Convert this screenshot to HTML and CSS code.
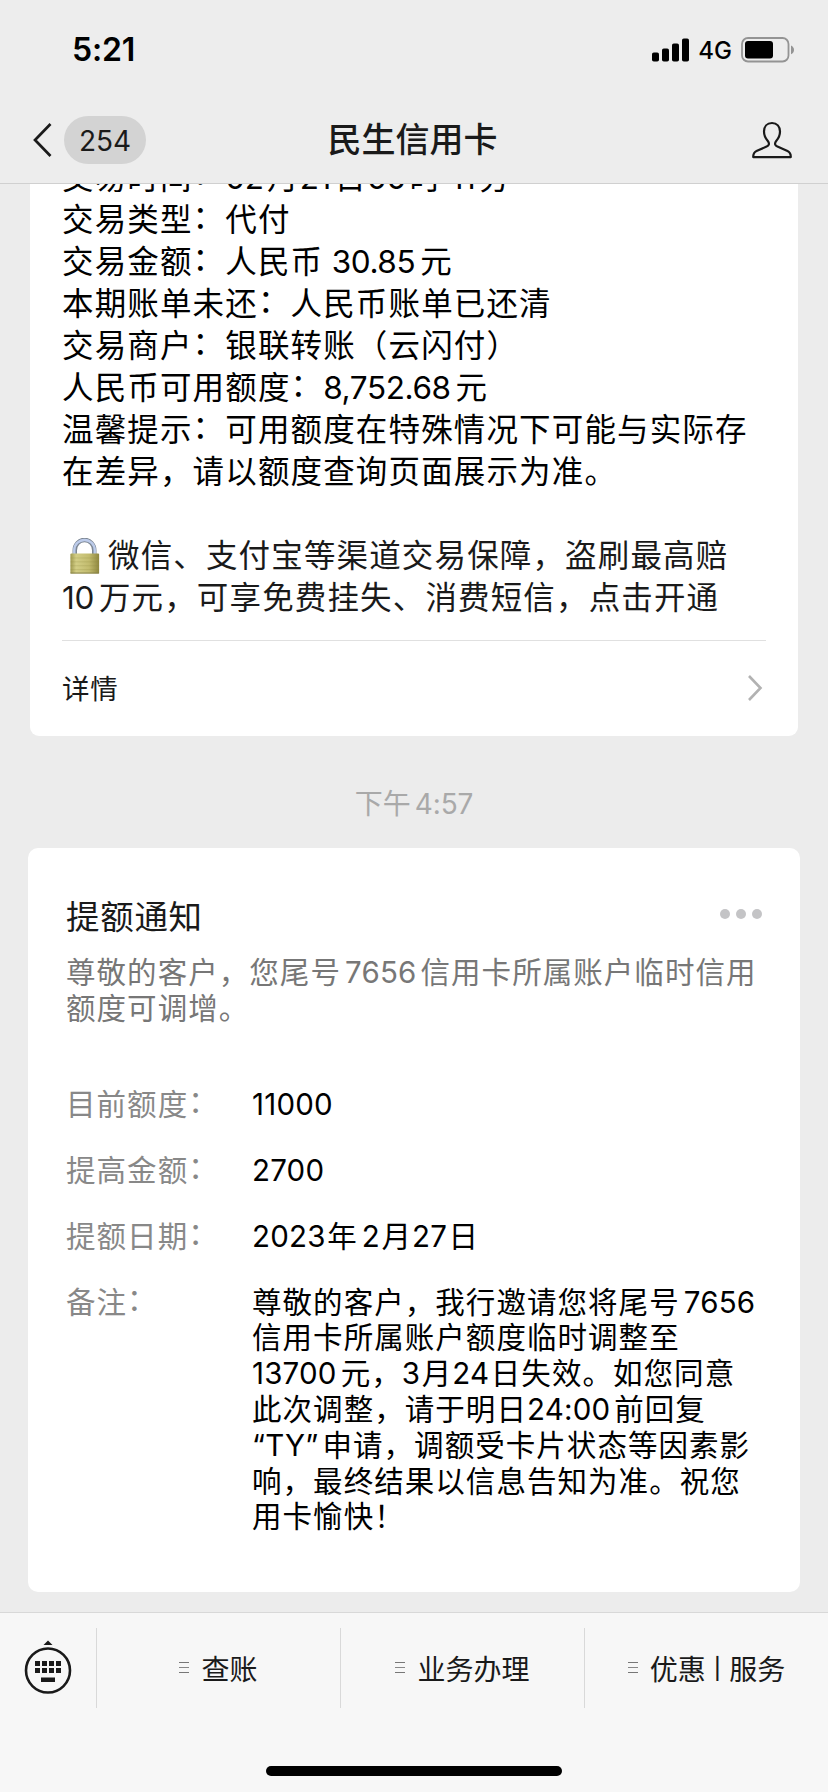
FILE: index.html
```html
<!DOCTYPE html>
<html lang="zh-CN">
<head>
<meta charset="utf-8">
<title>民生信用卡</title>
<link rel="stylesheet" href="styles.css">
</head>
<body>
<div class="screen">
  <header class="header">
    <div class="status">
      <span class="clock">5:21</span>
      <div class="status-right">
        <svg class="signal" width="37" height="24" viewBox="0 0 37 24"><rect x="0" y="14.5" width="7" height="9" rx="1.8"/><rect x="10" y="10.5" width="7" height="13" rx="1.8"/><rect x="20" y="5.5" width="7" height="18" rx="1.8"/><rect x="30" y="0.5" width="7" height="23" rx="1.8"/></svg>
        <span class="net">4G</span>
        <svg class="battery" width="54" height="26" viewBox="0 0 54 26"><rect x="1" y="1" width="46.5" height="23.5" rx="6" fill="none" stroke="#949494" stroke-width="1.8"/><rect x="4" y="4" width="28" height="17.5" rx="3" fill="#000"/><path d="M50 8.5c4 1.8 4 7 0 8.8z" fill="#949494"/></svg>
      </div>
    </div>
    <nav class="nav">
      <div class="nav-left">
        <svg width="20" height="36" viewBox="0 0 20 36" fill="none" stroke="#1a1a1a" stroke-width="2.7"><path d="M17.5 2L2 18l15.500 16"/></svg>
        <span class="unread">254</span>
      </div>
      <h1 class="title">民生信用卡</h1>
      <svg class="person" width="40" height="38" viewBox="0 0 40 38" fill="none" stroke="#1a1a1a" stroke-width="2.200" stroke-linejoin="round"><path d="M20 2c-5 0-8 3.500-8 8.500c0 4 1.600 7 3.800 9.500c1.800 2.200 1.500 4.400-1.200 5.600L4.500 30.100C1.500 31.500 1.200 33 1.200 36.100h37.600c0-3.100-.3-4.600-3.300-6L25.400 25.600c-2.700-1.200-3-3.400-1.200-5.600c2.200-2.500 3.800-5.500 3.800-9.500C28 5.500 25 2 20 2z"/></svg>
    </nav>
  </header>
  <main class="chat">
    <section class="card card-trade">
      <div class="trade-text">
        <p class="tight">交易时间<span class="c">：</span><span class="n">02</span>月<span class="n">21</span>日<span class="n">00</span>时<span class="n"> 11</span>分</p>
        <p>交易类型<span class="c">：</span>代付</p>
        <p>交易金额<span class="c">：</span>人民币<span class="n"> 30.85</span>元</p>
        <p>本期账单未还<span class="c">：</span>人民币账单已还清</p>
        <p>交易商户<span class="c">：</span>银联转账（云闪付）</p>
        <p>人民币可用额度<span class="c">：</span><span class="n">8,752.68</span>元</p>
        <p>温馨提示<span class="c">：</span>可用额度在特殊情况下可能与实际存</p>
        <p>在差异，请以额度查询页面展示为准。</p>
        <p class="gap"></p>
        <p class="soft"><svg class="lock" width="32" height="38" viewBox="0 0 32 38"><defs><linearGradient id="brass" x1="0" x2="1"><stop offset="0" stop-color="#a09a50"/><stop offset=".2" stop-color="#d3ce86"/><stop offset=".65" stop-color="#c2bb6e"/><stop offset="1" stop-color="#8f873f"/></linearGradient></defs><path d="M5.500 18V12.500a10 10.500 0 0 1 20 0V18" fill="none" stroke="#7d8794" stroke-width="4.600"/><path d="M5 18V12.500a10.500 10.500 0 0 1 21 0V18" fill="none" stroke="#bccbea" stroke-width="2.500"/><rect x="1" y="16" width="29.500" height="20.500" rx="1" fill="url(#brass)"/><path d="M1 20.500h29.500M1 24.500h29.500M1 28.500h29.500M1 32.500h29.500" stroke="#8d863f" stroke-opacity=".25"/><path d="M1 36h29.500" stroke="#858048"/></svg>微信、支付宝等渠道交易保障，盗刷最高赔</p>
        <p class="soft"><span class="n">10</span>万元，可享免费挂失、消费短信，点击开通</p>
      </div>
      <div class="detail">
        <span class="detail-label">详情</span>
        <svg class="chevron" width="16" height="28" viewBox="0 0 16 28" fill="none" stroke="#b2b2b2" stroke-width="2.600"><path d="M2 2l11.500 12L2 26"/></svg>
      </div>
    </section>
    <div class="time">下午<span class="n">4:57</span></div>
    <section class="card card-notice">
      <div class="notice-head">
        <h2>提额通知</h2>
        <div class="dots"><i></i><i></i><i></i></div>
      </div>
      <div class="notice-sub">
        <p>尊敬的客户，您尾号<span class="n lead trail">7656</span>信用卡所属账户临时信用</p>
        <p>额度可调增。</p>
      </div>
      <dl class="rows">
        <dt>目前额度<span class="c">：</span></dt><dd><span class="n">11000</span></dd>
        <dt>提高金额<span class="c">：</span></dt><dd><span class="n">2700</span></dd>
        <dt>提额日期<span class="c">：</span></dt><dd><span class="n">2023</span>年<span class="n lead">2</span>月<span class="n">27</span>日</dd>
        <dt>备注<span class="c">：</span></dt>
        <dd>
          <p>尊敬的客户，我行邀请您将尾号<span class="n lead">7656</span></p>
          <p>信用卡所属账户额度临时调整至</p>
          <p><span class="n trail">13700</span>元，<span class="n">3</span>月<span class="n">24</span>日失效。如您同意</p>
          <p>此次调整，请于明日<span class="n trail">24:00</span>前回复</p>
          <p><span class="n trail">“TY”</span>申请，调额受卡片状态等因素影</p>
          <p>响，最终结果以信息告知为准。祝您</p>
          <p>用卡愉快！</p>
        </dd>
      </dl>
    </section>
  </main>
  <footer class="footer">
    <div class="menu">
      <div class="keyboard">
        <svg width="48" height="55" viewBox="0 0 48 55"><path d="M24 0.500l4.500 4.500h-9z" fill="#1a1a1a"/><circle cx="24" cy="30.500" r="22" fill="none" stroke="#1a1a1a" stroke-width="2.600"/><path d="M11 21h5v5h-5zM18 21h5v5h-5zM25 21h5v5h-5zM32 21h5v5h-5zM11 28h5v5h-5zM18 28h5v5h-5zM25 28h5v5h-5zM32 28h5v5h-5zM17 37.500h14v4.500h-14z" fill="#1a1a1a"/></svg>
      </div>
      <div class="item"><b class="bars"></b>查账</div>
      <div class="item"><b class="bars"></b>业务办理</div>
      <div class="item"><b class="bars"></b>优惠<span class="pipe">|</span>服务</div>
    </div>
    <div class="home"></div>
  </footer>
</div>
</body>
</html>
```
FILE: styles.css
```css
* { box-sizing: border-box; margin: 0; padding: 0; }
body {
  background: #ececec;
  font-family: Inter, "Noto Sans CJK SC", sans-serif;
  color: #000;
}
p { white-space: nowrap; }
.screen {
  width: 828px;
  height: 1792px;
  display: flex;
  flex-direction: column;
  overflow: hidden;
}
.header {
  height: 184px;
  flex: none;
  background: #ededed;
  border-bottom: 1px solid #d0d0d0;
}
.status {
  height: 100px;
  padding: 0 33px 0 72px;
  display: flex;
  align-items: center;
  justify-content: space-between;
}
.clock { font-size: 32px; font-weight: 600; letter-spacing: -.2px; padding-bottom: 1px; }
.status-right { display: flex; align-items: center; }
.net { font-size: 24px; font-weight: 500; margin: 1px 9px 0 9px; }
.nav {
  height: 80px;
  padding: 0 36px 0 33px;
  display: flex;
  align-items: center;
  justify-content: space-between;
}
.nav-left { display: flex; align-items: center; gap: 11px; width: 200px; }
.unread {
  width: 82px;
  height: 48px;
  border-radius: 24px;
  background: #d3d3d3;
  color: #1a1a1a;
  font-size: 28px;
  line-height: 50px;
  text-align: center;
}
.title { font-size: 34px; font-weight: 500; line-height: 48px; color: #1a1a1a; }
.nav .person { margin-left: 160px; }
.chat { height: 1428px; flex: none; overflow: hidden; }
.card { background: #fff; }
.card-trade {
  margin: 0 30px;
  height: 552px;
  padding: 0 32px;
  display: flow-root;
  clip-path: inset(0 round 0 0 9px 9px);
}
.trade-text {
  margin-top: -27px;
  font-size: 31.500px;
  line-height: 42px;
  letter-spacing: 1.150px;
}
.trade-text p { height: 42px; }
.trade-text .n { letter-spacing: -.4px; margin-right: 5px; white-space: pre; }
.trade-text .tight .n { margin-right: 3.500px; }
/* full-width colons sit at the middle of the line */
.c { vertical-align: 3px; line-height: 0; }
.trade-text .tight .c { vertical-align: 5px; }
.soft { color: #1a1a1a; }
.lock { vertical-align: -8px; margin: 0 7px 0 7px; height: 37px; }
.detail {
  margin-top: 21px;
  border-top: 1px solid #e0e0e0;
  height: 96px;
  padding-right: 3px;
  display: flex;
  align-items: center;
  justify-content: space-between;
  font-size: 27.500px;
  letter-spacing: .8px;
  color: #1a1a1a;
}
.detail-label { padding-bottom: 4px; }
.chevron { margin-bottom: 1px; }
.time {
  height: 112px;
  line-height: 137px;
  text-align: center;
  font-size: 28px;
  color: #a9a9a9;
}
.time .n { margin-left: 4px; letter-spacing: -.1px; }
.card-notice {
  margin: 0 28px;
  height: 744px;
  border-radius: 10px;
  padding: 45px 38px 0;
}
.notice-head { display: flex; justify-content: space-between; height: 48px; }
.notice-head h2 { font-size: 33.500px; font-weight: 400; line-height: 48px; letter-spacing: .7px; color: #1a1a1a; }
.dots { display: flex; gap: 6px; padding-top: 16px; }
.dots i { width: 10px; height: 10px; border-radius: 50%; background: #c4c4c6; }
.notice-sub { margin-top: 14px; font-size: 29.500px; line-height: 35.800px; letter-spacing: 1.050px; color: #777; }
.rows {
  margin-top: 60px;
  display: grid;
  grid-template-columns: 186px 1fr;
  row-gap: 30.200px;
  font-size: 29.500px;
  line-height: 35.800px;
  letter-spacing: 1.050px;
}
.rows dt { color: #888; }
.card-notice .n { letter-spacing: .2px; margin-right: 1.500px; }
.card-notice .lead { margin-left: 4px; }
.card-notice .trail { margin-right: 4px; }
.footer {
  height: 180px;
  flex: none;
  background: #f7f7f7;
  border-top: 1px solid #d8d8d8;
}
.menu { display: flex; padding-top: 15px; height: 153px; }
.keyboard { width: 96px; height: 80px; padding: 12px 0 0 24px; }
.item {
  flex: 1;
  height: 80px;
  padding-bottom: 1px;
  border-left: 1px solid #d9d9d9;
  display: flex;
  align-items: center;
  justify-content: center;
  font-size: 28px;
  color: #1a1a1a;
}
.bars {
  width: 10px;
  height: 11px;
  margin-right: 12px;
  border-top: 1px solid #777;
  border-bottom: 1px solid #777;
  background: linear-gradient(#888, #888) 0 4px / 10px 1px no-repeat;
}
.pipe { font-size: 21px; font-weight: 500; margin: 2px 8px 0; }
.home { width: 296px; height: 10px; border-radius: 5px; background: #000; margin: 0 auto; }
```
